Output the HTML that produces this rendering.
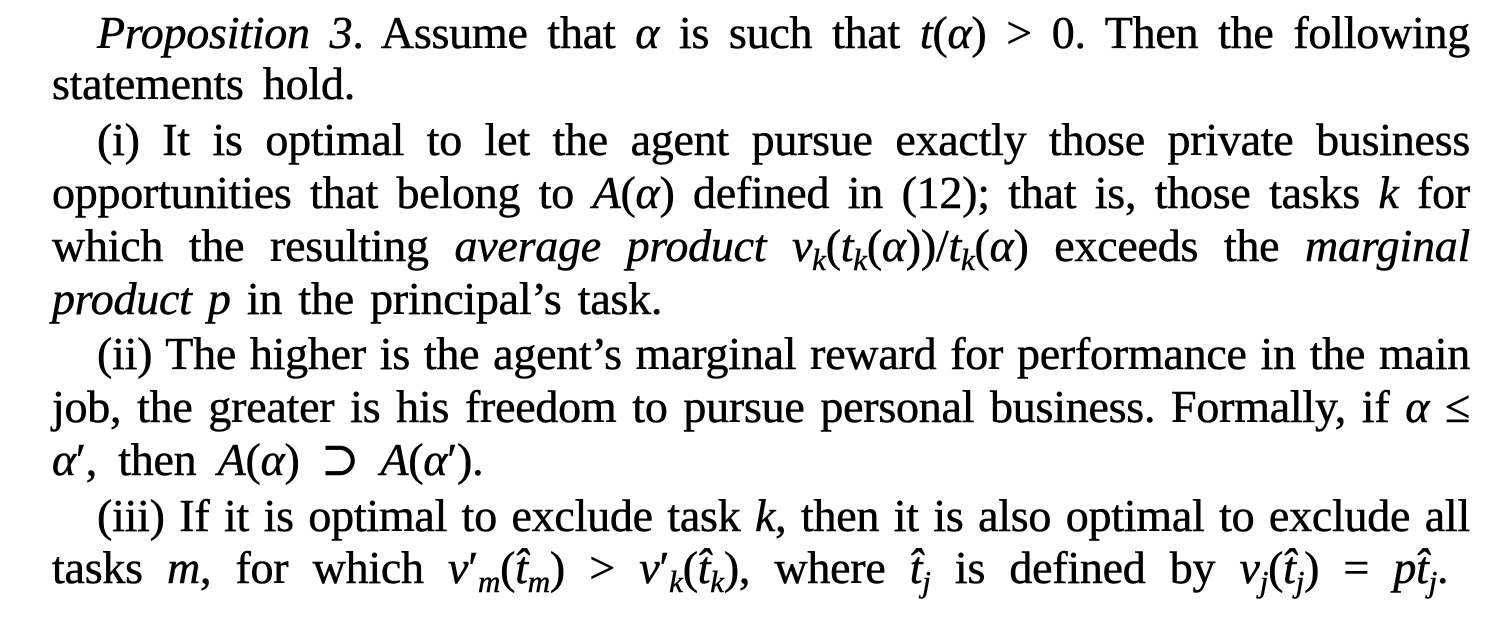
<!DOCTYPE html>
<html><head><meta charset="utf-8"><style>
html,body{margin:0;padding:0;background:#fff;}
body{width:1510px;height:634px;position:relative;overflow:hidden;font-family:"Liberation Serif","DejaVu Serif",serif;font-size:46px;letter-spacing:-0.25px;color:#000;-webkit-text-stroke:0.5px #000;}
.l{position:absolute;left:52px;width:1418px;line-height:53px;white-space:nowrap;}
.j{text-align:justify;text-align-last:justify;white-space:normal;}
.in{left:97px;width:1373px;}
i{font-style:italic;}
sub{font-size:31px;vertical-align:-9px;line-height:0;}
</style></head><body>
<div class="l j in" style="top:6px"><i>Proposition 3</i>. Assume that <i>α</i> is such that <i>t</i>(<i>α</i>) &gt; 0. Then the following</div>
<div class="l" style="top:57px;word-spacing:8px">statements hold.</div>
<div class="l j in" style="top:113px">(i) It is optimal to let the agent pursue exactly those private business</div>
<div class="l j" style="top:166px">opportunities that belong to <i>A</i>(<i>α</i>) defined in (12); that is, those tasks <i>k</i> for</div>
<div class="l j" style="top:219px">which the resulting <i>average product v<sub>k</sub></i>(<i>t<sub>k</sub></i>(<i>α</i>))/<i>t<sub>k</sub></i>(<i>α</i>) exceeds the <i>marginal</i></div>
<div class="l" style="top:272px;word-spacing:5px"><i>product p</i> in the principal’s task.</div>
<div class="l j in" style="top:327px">(ii) The higher is the agent’s marginal reward for performance in the main</div>
<div class="l j" style="top:380px">job, the greater is his freedom to pursue personal business. Formally, if <i>α</i> ≤</div>
<div class="l" style="top:433px;word-spacing:10px"><i>α</i>′, then <i>A</i>(<i>α</i>) ⊃ <i>A</i>(<i>α</i>′).</div>
<div class="l j in" style="top:489px">(iii) If it is optimal to exclude task <i>k</i>, then it is also optimal to exclude all</div>
<div class="l" style="top:541px;word-spacing:13px">tasks <i>m</i>, for which <i>v</i>′<sub><i>m</i></sub>(<i>t̂<sub>m</sub></i>) &gt; <i>v</i>′<sub><i>k</i></sub>(<i>t̂<sub>k</sub></i>), where <i>t̂<sub>j</sub></i> is defined by <i>v<sub>j</sub></i>(<i>t̂<sub>j</sub></i>) = <i>pt̂<sub>j</sub></i>.</div>
</body></html>
